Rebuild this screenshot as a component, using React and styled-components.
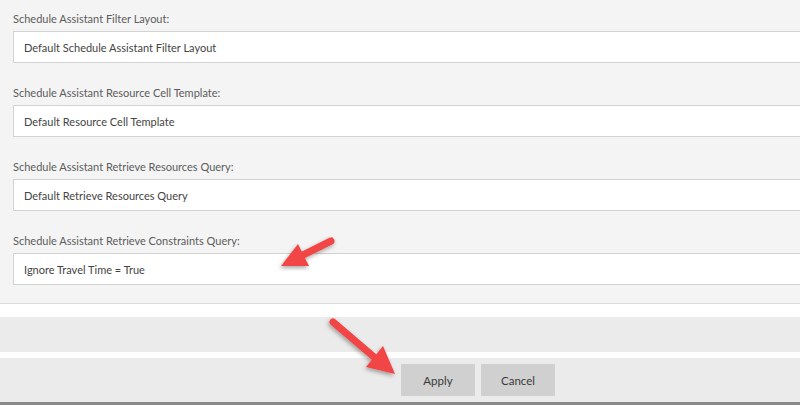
import React from "react";
import styled, { createGlobalStyle } from "styled-components";

const Global = createGlobalStyle`
  html, body { margin: 0; padding: 0; background: #f4f4f4; }
  body { font-family: "Lato", "Open Sans", sans-serif; overflow: hidden; }
`;

const Page = styled.div`
  position: relative;
  width: 800px;
  height: 405px;
  overflow: hidden;
  display: flex;
  flex-direction: column;
`;

const Panel = styled.div`
  background: #f4f4f4;
  padding: 11px 0 18px 13px;
  border-bottom: 1px solid #dcdcdc;
  display: flex;
  flex-direction: column;
  gap: 22px;
`;

const Field = styled.div`
  display: flex;
  flex-direction: column;
  gap: 4px;
`;

const Label = styled.div`
  font-size: 11px;
  line-height: 16px;
  color: #5c5c5c;
`;

const Input = styled.div`
  box-sizing: border-box;
  width: 800px;
  height: 32px;
  background: #fff;
  border: 1px solid #d2d2d2;
  padding: 0 10px;
  display: flex;
  align-items: center;
  font-size: 11px;
  color: #444;
`;

const Strip = styled.div`
  height: ${(p) => p.h}px;
  background: ${(p) => p.bg};
  flex: none;
`;

const Footer = styled.div`
  flex: 1;
  background: #ebebeb;
  border-bottom: 3px solid #8a8a8a;
  display: flex;
  gap: 6px;
  padding: 6px 0 0 401px;
`;

const Button = styled.div`
  width: 74px;
  height: 32px;
  background: #d0d0d0;
  color: #3a3a3a;
  font-size: 11.5px;
  display: flex;
  align-items: center;
  justify-content: center;
`;

const Overlay = styled.svg`
  position: absolute;
  left: 0;
  top: 0;
  pointer-events: none;
`;

const fields = [
  ["Schedule Assistant Filter Layout:", "Default Schedule Assistant Filter Layout"],
  ["Schedule Assistant Resource Cell Template:", "Default Resource Cell Template"],
  ["Schedule Assistant Retrieve Resources Query:", "Default Retrieve Resources Query"],
  ["Schedule Assistant Retrieve Constraints Query:", "Ignore Travel Time = True"],
];

function Arrow({ tail, tip, base, c1, c2 }) {
  return (
    <g filter="url(#sh)">
      <line x1={tail[0]} y1={tail[1]} x2={base[0]} y2={base[1]} stroke="#f24444" strokeWidth="7" strokeLinecap="round" />
      <polygon points={`${tip[0]},${tip[1]} ${c1[0]},${c1[1]} ${c2[0]},${c2[1]}`} fill="#f24444" />
    </g>
  );
}

export default function App() {
  return (
    <>
      <Global />
      <Page>
        <Panel>
          {fields.map(([l, v]) => (
            <Field key={l}>
              <Label>{l}</Label>
              <Input>{v}</Input>
            </Field>
          ))}
        </Panel>
        <Strip h={13} bg="#ffffff" />
        <Strip h={35} bg="#ebebeb" />
        <Strip h={6} bg="#ffffff" />
        <Footer>
          <Button>Apply</Button>
          <Button>Cancel</Button>
        </Footer>
        <Overlay width="800" height="405" viewBox="0 0 800 405">
          <defs>
            <filter id="sh" x="-20%" y="-20%" width="140%" height="140%">
              <feDropShadow dx="-1" dy="2" stdDeviation="2" floodColor="#000" floodOpacity="0.35" />
            </filter>
          </defs>
          <Arrow tail={[331, 241]} tip={[281, 266]} base={[303, 255]} c1={[309, 266]} c2={[298, 244]} />
          <Arrow tail={[333, 322]} tip={[395, 374]} base={[374, 357]} c1={[366, 367]} c2={[383, 346]} />
        </Overlay>
      </Page>
    </>
  );
}
